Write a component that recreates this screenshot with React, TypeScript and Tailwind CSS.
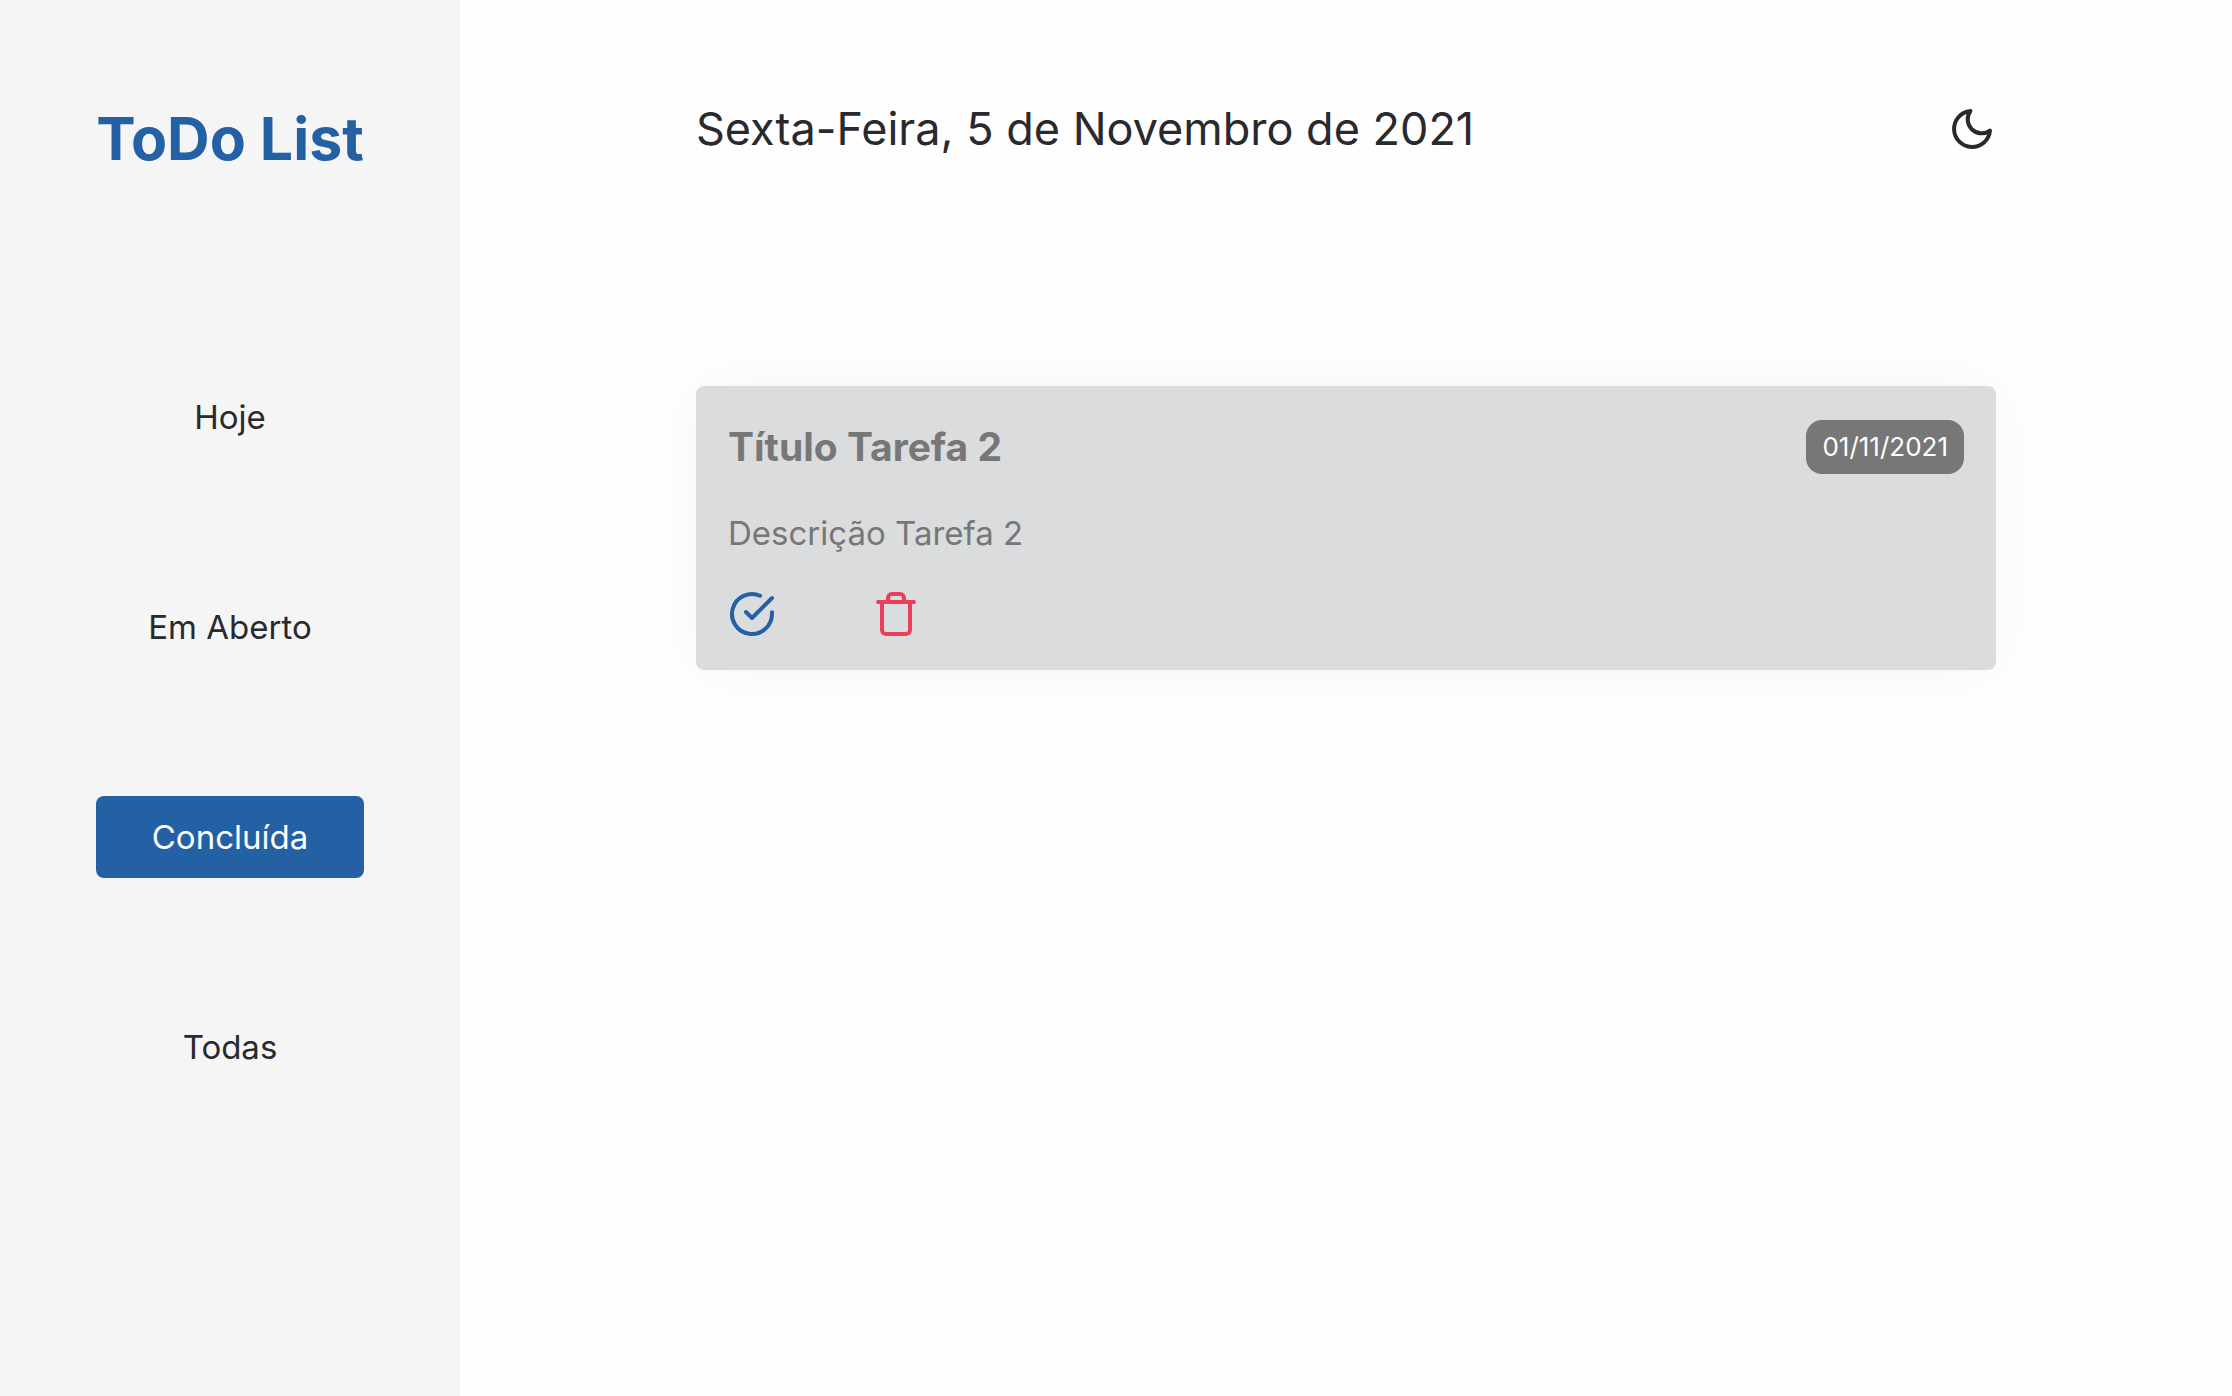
import { useState } from "react";
import { FiCheckCircle, FiMoon, FiTrash } from "react-icons/fi";

const filters = ["Hoje", "Em Aberto", "Concluída", "Todas"];

const tasks = [
  { title: "Título Tarefa 2", description: "Descrição Tarefa 2", date: "01/11/2021" },
];

function Sidebar() {
  const [active, setActive] = useState("Concluída");
  return (
    <aside className="flex w-[460px] shrink-0 flex-col bg-[#f5f5f5] px-24 py-24">
      <h1 className="whitespace-nowrap text-center text-[59px] leading-[86px] font-bold text-[#2460a4]">
        ToDo List
      </h1>
      <nav className="mt-[194px] flex flex-col gap-32">
        {filters.map((name) => (
          <button
            key={name}
            type="button"
            onClick={() => setActive(name)}
            className={
              name === active
                ? "w-full rounded-lg bg-[#2460a4] py-4 text-[33px] leading-[50px] text-[#fdfdfd]"
                : "w-full rounded-lg py-4 text-[33px] leading-[50px] text-[#29292e]"
            }
          >
            {name}
          </button>
        ))}
      </nav>
    </aside>
  );
}

function TaskCard({ title, description, date }: (typeof tasks)[number]) {
  return (
    <article className="flex flex-col gap-8 rounded-lg bg-[#dbdcde] p-8 text-[#777777] shadow-[0_0_60px_rgba(0,0,0,0.04)]">
      <div className="flex items-center justify-between">
        <h2 className="text-[39px] leading-[58px] font-bold">{title}</h2>
        <time className="rounded-2xl bg-[#777777] px-4 py-2 text-[26px] leading-[38px] text-[#fdfdfd]">
          {date}
        </time>
      </div>
      <p className="text-[33px] leading-[50px]">{description}</p>
      <div className="flex gap-24">
        <button type="button" aria-label="Concluir tarefa" className="text-[#2460a4]">
          <FiCheckCircle className="size-12" />
        </button>
        <button type="button" aria-label="Excluir tarefa" className="text-[#e83f5b]">
          <FiTrash className="size-12" />
        </button>
      </div>
    </article>
  );
}

export default function App() {
  return (
    <div className="flex min-h-screen bg-[#fefefe] font-['Inter',sans-serif] text-[#29292e]">
      <Sidebar />
      <main className="min-w-0 flex-1 px-8 py-24">
        <div className="mx-auto flex max-w-[1300px] flex-col gap-56">
          <header className="flex items-center justify-between">
            <p className="text-[45px] leading-[66px]">Sexta-Feira, 5 de Novembro de 2021</p>
            <button type="button" aria-label="Alternar tema">
              <FiMoon className="size-12" />
            </button>
          </header>
          <section className="flex flex-col gap-8">
            {tasks.map((task) => (
              <TaskCard key={task.title} {...task} />
            ))}
          </section>
        </div>
      </main>
    </div>
  );
}
